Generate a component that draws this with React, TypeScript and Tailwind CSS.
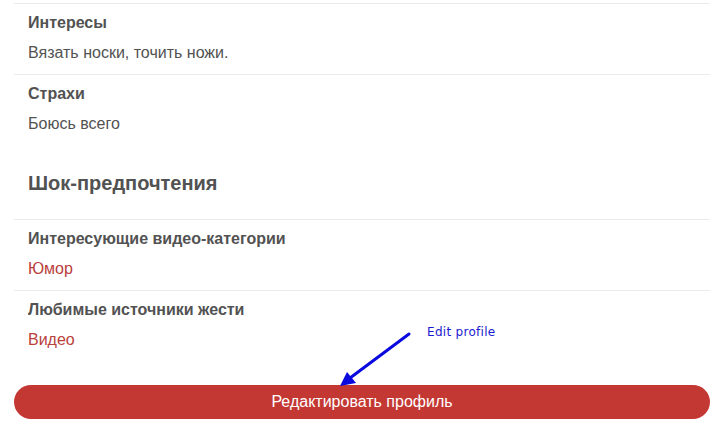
const rows1 = [
  { label: "Интересы", value: "Вязать носки, точить ножи." },
  { label: "Страхи", value: "Боюсь всего" },
];

const rows2 = [
  { label: "Интересующие видео-категории", value: "Юмор" },
  { label: "Любимые источники жести", value: "Видео" },
];

function InfoRow({ label, value, accent }: { label: string; value: string; accent?: boolean }) {
  return (
    <div className="border-t border-[#ebebeb] pl-[14px] pt-[8px] pb-[11px]">
      <p className="text-[16px] leading-[21px] font-bold text-[#525252]">{label}</p>
      <p className={`mt-[9px] text-[16px] leading-[21px] ${accent ? "text-[#b9403b]" : "text-[#525252]"}`}>{value}</p>
    </div>
  );
}

export default function App() {
  return (
    <div className="relative w-[728px] h-[438px] bg-white overflow-hidden" style={{ fontFamily: '"Liberation Sans", Arial, sans-serif' }}>
      <div className="ml-[14px] mr-[18px] pt-[3px]">
        {rows1.map((r) => (
          <InfoRow key={r.label} label={r.label} value={r.value} />
        ))}

        <h2 className="mt-[24px] mb-[22px] pl-[14px] text-[20px] leading-[28px] font-bold text-[#525252]">Шок-предпочтения</h2>

        {rows2.map((r) => (
          <InfoRow key={r.label} label={r.label} value={r.value} accent />
        ))}

        <button className="mt-[24px] w-full h-[34px] rounded-full bg-[#c43834] text-white text-[16px]">
          Редактировать профиль
        </button>
      </div>

      {/* annotation */}
      <svg className="absolute left-0 top-0 pointer-events-none" width="728" height="438">
        <line x1="409" y1="334" x2="350" y2="378" stroke="#0a0adf" strokeWidth="3" strokeLinecap="round" />
        <polygon points="340,386 347,372 356,383" fill="#0a0adf" />
      </svg>
      <span className="absolute left-[427px] top-[323px] text-[12px] tracking-[0.3px] text-[#1a1ad0]" style={{ fontFamily: '"DejaVu Sans", Tahoma, sans-serif' }}>
        Edit profile
      </span>
    </div>
  );
}
